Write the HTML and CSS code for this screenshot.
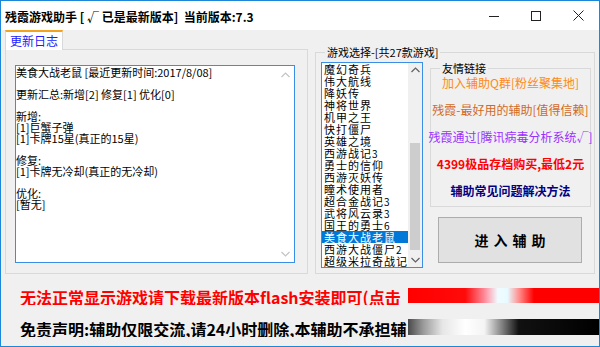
FILE: index.html
```html
<!DOCTYPE html>
<html lang="zh-CN">
<head>
<meta charset="utf-8">
<title>残霞游戏助手</title>
<link rel="stylesheet" href="styles.css">
</head>
<body>
<div class="window">
  <div class="titlebar">
    <span class="title">残霞游戏助手 [ √ 已是最新版本]  当前版本:7.3</span>
    <div class="controls">
      <div class="ctl"><svg width="10" height="10" viewBox="0 0 10 10"><path d="M0 5.5H10" stroke="#222" stroke-width="1"/></svg></div>
      <div class="ctl"><svg width="10" height="10" viewBox="0 0 10 10"><rect x="0.5" y="0.5" width="9" height="9" fill="none" stroke="#222" stroke-width="1"/></svg></div>
      <div class="ctl"><svg width="11" height="11" viewBox="0 0 11 11"><path d="M0.5 0.5L10.5 10.5M10.5 0.5L0.5 10.5" stroke="#222" stroke-width="1"/></svg></div>
    </div>
  </div>
  <div class="client">
    <div class="top">
      <div class="tabctl">
        <div class="tabstrip"><div class="tab">更新日志</div></div>
        <div class="tabpage">
          <div class="logbox">
            <div class="logtext">美食大战老鼠 [最近更新时间:2017/8/08]

更新汇总:新增[2] 修复[1] 优化[0]

新增:
[1]巨蟹子弹
[1]卡牌15星(真正的15星)

修复:
[1]卡牌无冷却(真正的无冷却)

优化:
[暂无]</div>
            <div class="vscroll light">
              <div class="arrow big"><svg width="9" height="6" viewBox="0 0 9 6"><path d="M0.5 5L4.5 1L8.5 5" fill="none" stroke="#c4c4c4" stroke-width="1.2"/></svg></div>
              <div class="track"></div>
              <div class="arrow big"><svg width="9" height="6" viewBox="0 0 9 6"><path d="M0.5 1L4.5 5L8.5 1" fill="none" stroke="#c4c4c4" stroke-width="1.2"/></svg></div>
            </div>
          </div>
        </div>
      </div>
      <fieldset class="games">
        <legend>游戏选择-[共27款游戏]</legend>
        <div class="gbody">
          <div class="listbox">
            <div class="items">
              <div class="item">魔幻奇兵</div>
              <div class="item">伟大航线</div>
              <div class="item">降妖传</div>
              <div class="item">神将世界</div>
              <div class="item">机甲之王</div>
              <div class="item">快打僵尸</div>
              <div class="item">英雄之境</div>
              <div class="item">西游战记<small>3</small></div>
              <div class="item">勇士的信仰</div>
              <div class="item">西游灭妖传</div>
              <div class="item">瞳术使用者</div>
              <div class="item">超合金战记<small>3</small></div>
              <div class="item">武将风云录<small>3</small></div>
              <div class="item">国王的勇士<small>6</small></div>
              <div class="item selected">美食大战老鼠</div>
              <div class="item">西游大战僵尸<small>2</small></div>
              <div class="item">超级米拉奇战记</div>
            </div>
            <div class="vscroll small">
              <div class="arrow"><svg width="9" height="6" viewBox="0 0 9 6"><path d="M0.5 5L4.5 1L8.5 5" fill="none" stroke="#606060" stroke-width="1.2"/></svg></div>
              <div class="track"><div class="thumb"></div></div>
              <div class="arrow"><svg width="9" height="6" viewBox="0 0 9 6"><path d="M0.5 1L4.5 5L8.5 1" fill="none" stroke="#606060" stroke-width="1.2"/></svg></div>
            </div>
          </div>
          <div class="rightcol">
            <fieldset class="links">
              <legend>友情链接</legend>
              <div class="linklist">
                <div class="lnk orange">加入辅助Q群[粉丝聚集地]</div>
                <div class="lnk brown">残霞-最好用的辅助[值得信赖]</div>
                <div class="lnk purple">残霞通过[腾讯病毒分析系统√]</div>
                <div class="lnk red">4399极品存档购买,最低2元</div>
                <div class="lnk navy">辅助常见问题解决方法</div>
              </div>
            </fieldset>
            <button class="enter">进入辅助</button>
          </div>
        </div>
      </fieldset>
    </div>
    <div class="notice notice-red"><span class="ntext">无法正常显示游戏请下载最新版本flash安装即可(点击</span><span class="bar bar-red"></span></div>
    <div class="notice notice-black"><span class="ntext">免责声明:辅助仅限交流,请24小时删除,本辅助不承担辅</span><span class="bar bar-black"></span></div>
  </div>
</div>
</body>
</html>
```
FILE: styles.css
```css
* { box-sizing: border-box; }
html, body { margin: 0; padding: 0; }
body {
  width: 600px;
  height: 347px;
  overflow: hidden;
  background: #fff;
  font-family: "Noto Sans CJK SC", "Liberation Sans", sans-serif;
  color: #000;
}
.window {
  width: 600px;
  height: 347px;
  border: 1px solid #1c86d8;
  display: flex;
  flex-direction: column;
  background: #f0f0f0;
}
.titlebar {
  height: 29px;
  flex-shrink: 0;
  background: #fff;
  display: flex;
  align-items: center;
}
.title {
  flex: 1;
  font-size: 12px;
  font-weight: 700;
  line-height: 16px;
  padding-left: 4px;
  margin-top: 2px;
  white-space: pre;
}
.controls { display: flex; height: 29px; }
.ctl {
  width: 42px;
  height: 29px;
  display: flex;
  align-items: center;
  justify-content: center;
}
.client { flex: 1; }
.top { display: flex; height: 244px; }

/* tab control */
.tabctl {
  margin-left: 4px;
  width: 303px;
  display: flex;
  flex-direction: column;
}
.tabstrip { height: 19px; display: flex; }
.tab {
  width: 58px;
  height: 20px;
  background: #fff;
  border: 1px solid #d9d9d9;
  border-top: 2px solid #f2a31f;
  border-bottom: none;
  color: #2020ff;
  font-size: 12px;
  line-height: 17px;
  text-align: center;
  position: relative;
  z-index: 1;
}
.tabpage {
  flex: 1;
  border: 1px solid #d9d9d9;
  padding: 15px 0 0 9px;
}
.logbox {
  width: 280px;
  height: 198px;
  border: 1px solid #3a8ee6;
  background: #fff;
  display: flex;
}
.logtext {
  flex: 1;
  font-size: 11px;
  line-height: 11px;
  white-space: pre;
  padding-top: 1px;
}

/* scrollbars */
.vscroll { display: flex; flex-direction: column; }
.vscroll.light { width: 17px; background: #fff; }
.vscroll.small { width: 14px; background: #f0f0f0; }
.arrow {
  height: 14px;
  display: flex;
  align-items: center;
  justify-content: center;
}
.arrow.big { height: 17px; }
.track { flex: 1; padding-top: 66px; }
.thumb {
  height: 107px;
  margin: 0 2px;
  background: #cdcdcd;
}

/* game group */
.games {
  margin: 15px 0 0 7px;
  padding: 0;
  width: 280px;
  height: 229px;
  min-width: 0;
  border: 1px solid #d9d9d9;
}
.games > legend, .links > legend {
  font-size: 11px;
  line-height: 14px;
  padding: 0 2px;
  margin-left: 9px;
}
.gbody { display: flex; padding: 3px 0 0 5px; }
.listbox {
  width: 102px;
  height: 206px;
  border: 1px solid #3a8ee6;
  background: #fff;
  display: flex;
}
.items { flex: 1; overflow: hidden; }
.item {
  height: 12px;
  font-size: 11px;
  line-height: 12px;
  letter-spacing: 1px;
  padding-left: 2px;
  white-space: nowrap;
}
.item small { font-size: 10px; letter-spacing: 0; }
.item.selected { background: #0078d7; color: #fff; }

.rightcol {
  margin-left: 7px;
  width: 161px;
  display: flex;
  flex-direction: column;
}
.links {
  margin: 0;
  padding: 0 0 6px 0;
  min-width: 0;
  border: 1px solid #d9d9d9;
}
.links > legend { line-height: 12px; }
.linklist {
  display: flex;
  flex-direction: column;
  align-items: center;
  gap: 9px;
}
.lnk {
  font-size: 12px;
  line-height: 18px;
  white-space: nowrap;
}
.orange { color: #ff8a14; }
.brown { color: #d2691e; }
.purple { color: #9b30ff; }
.red { color: #ff0000; font-weight: 700; }
.navy { color: #000080; font-weight: 700; }

.enter {
  margin: 10px 0 0 8px;
  width: 144px;
  height: 46px;
  background: #e1e1e1;
  border: 1px solid #adadad;
  font-family: "Noto Sans CJK SC", sans-serif;
  font-size: 14px;
  font-weight: 700;
  letter-spacing: 5px;
  padding: 0 0 0 5px;
  color: #000;
}

/* bottom notices */
.notice {
  display: flex;
  padding-left: 19px;
  font-size: 16px;
  font-weight: 700;
  white-space: nowrap;
}
.ntext {
  width: 388px;
  height: 16px;
  line-height: 16px;
  overflow: hidden;
}
.notice-red { margin-top: 14px; height: 17px; align-items: flex-start; color: #ff0000; }
.notice-red .ntext { margin-top: 1px; }
.notice-black { margin-top: 14px; height: 18px; align-items: flex-start; color: #000; }
.notice-black .ntext { margin-top: 2px; }
.bar { flex: 1; }
.bar-red {
  height: 15px;
  background: linear-gradient(90deg, #ff0000 0%, #ff0a0a 30%, #ff8a9a 40%, #f0fbff 47%, #e8fbff 52%, #ff9090 58%, #ff0000 66%, #ff0000 100%);
}
.bar-black {
  height: 16px;
  background: linear-gradient(90deg, #4a4a4a 0%, #9a9a9a 8%, #e6e6e6 18%, #ffffff 30%, #f4f4f4 40%, #777777 50%, #111111 58%, #000000 100%);
}
```
